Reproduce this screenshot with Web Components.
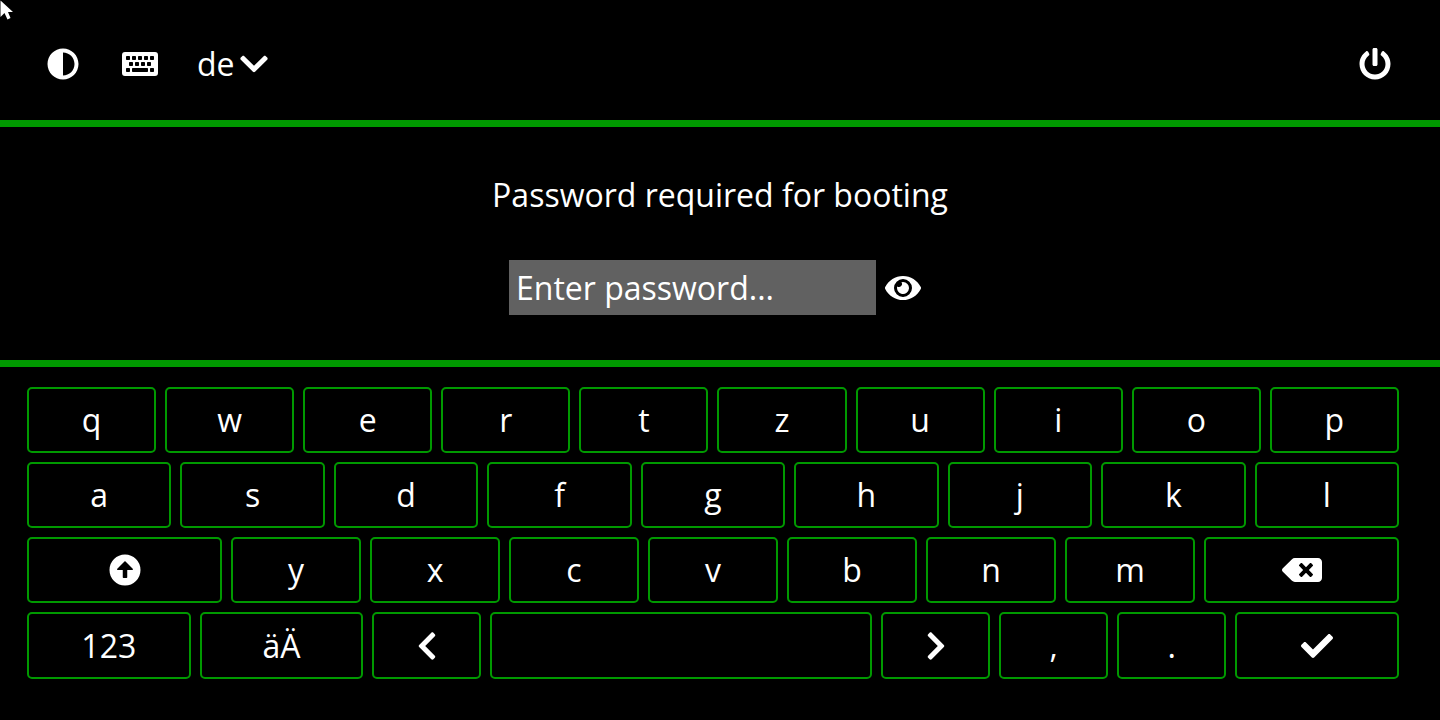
<!DOCTYPE html>
<html lang="en">
<head>
<meta charset="utf-8">
<title>Unlock</title>
<style>
html, body { height: 100%; }
body { margin: 0; background: #000; color: #fff; font: 32px/44px "Open Sans", "Noto Sans", sans-serif; }
</style>
</head>
<body>
<unlock-screen></unlock-screen>
<script>
const ICONS = {
  contrast: [512, 512, 'M8 256c0 136.966 111.033 248 248 248s248-111.034 248-248S392.966 8 256 8 8 119.033 8 256zm248 184V72c101.705 0 184 82.311 184 184 0 101.705-82.311 184-184 184z'],
  keyboard: [576, 512, 'M48 64H528a48 48 0 0 1 48 48V400a48 48 0 0 1-48 48H48a48 48 0 0 1-48-48V112a48 48 0 0 1 48-48z' +
    [[64,128],[160,128],[256,128],[352,128],[448,128],[112,224],[208,224],[304,224],[400,224],[64,320],[448,320]].map(([x, y]) => `M${x + 12} ${y}a12 12 0 0 0-12 12v40a12 12 0 0 0 12 12h40a12 12 0 0 0 12-12v-40a12 12 0 0 0-12-12z`).join('') +
    'M172 320a12 12 0 0 0-12 12v40a12 12 0 0 0 12 12h232a12 12 0 0 0 12-12v-40a12 12 0 0 0-12-12z'],
  power: [512, 512, 'M400 54.1c63 45 104 118.6 104 201.9 0 136.8-110.8 247.7-247.5 248C120 504.3 8.2 393 8 256.4 7.9 173.1 48.9 99.3 111.8 54.2c11.7-8.3 28-4.8 35 7.7L162.6 90c5.9 10.5 3.1 23.8-6.6 31-41.5 30.8-68 79.6-68 134.9-.1 92.3 74.5 168.1 168 168.1 91.6 0 168.6-74.2 168-169.1-.3-51.8-24.7-101.8-68.1-134-9.7-7.2-12.4-20.5-6.5-30.9l15.8-28.1c7-12.4 23.2-16.1 34.8-7.8zM296 264V24c0-13.3-10.7-24-24-24h-32c-13.3 0-24 10.7-24 24v240c0 13.3 10.7 24 24 24h32c13.3 0 24-10.7 24-24z'],
  eye: [576, 512, 'M572.52 241.4C518.29 135.59 410.93 64 288 64S57.68 135.64 3.48 241.41a32.35 32.35 0 0 0 0 29.19C57.71 376.41 165.07 448 288 448s230.32-71.64 284.52-177.41a32.35 32.35 0 0 0 0-29.19zM288 400a144 144 0 1 1 144-144 143.93 143.93 0 0 1-144 144zm0-240a95.31 95.31 0 0 0-25.31 3.79 47.85 47.85 0 0 1-66.9 66.9A95.78 95.78 0 1 0 288 160z'],
  down: [448, 512, 'M207.029 381.476L12.686 187.132c-9.373-9.373-9.373-24.569 0-33.941l22.667-22.667c9.357-9.357 24.522-9.375 33.901-.04L224 284.505l154.745-154.021c9.379-9.335 24.544-9.317 33.901.04l22.667 22.667c9.373 9.373 9.373 24.569 0 33.941L240.971 381.476c-9.373 9.372-24.569 9.372-33.942 0z'],
  left: [320, 512, 'M34.52 239.03L228.87 44.69c9.37-9.37 24.57-9.37 33.94 0l22.67 22.67c9.36 9.36 9.37 24.52.04 33.9L131.49 256l154.02 154.75c9.34 9.38 9.32 24.54-.04 33.9l-22.67 22.67c-9.37 9.37-24.57 9.37-33.94 0L34.52 272.97c-9.37-9.37-9.37-24.57 0-33.94z'],
  right: [320, 512, 'M285.476 272.971L91.132 467.314c-9.373 9.373-24.569 9.373-33.941 0l-22.667-22.667c-9.357-9.357-9.375-24.522-.04-33.901L188.505 256 34.484 101.255c-9.335-9.379-9.317-24.544.04-33.901l22.667-22.667c9.373-9.373 24.569-9.373 33.941 0L285.475 239.03c9.373 9.372 9.373 24.568.001 33.941z'],
  check: [512, 512, 'M173.898 439.404l-166.4-166.4c-9.997-9.997-9.997-26.206 0-36.204l36.203-36.204c9.997-9.998 26.207-9.998 36.204 0L192 312.69 432.095 72.596c9.997-9.997 26.207-9.997 36.204 0l36.203 36.204c9.997 9.997 9.997 26.206 0 36.204l-294.4 294.401c-9.998 9.997-26.207 9.997-36.204-.001z'],
  shift: [512, 512, 'M256 8a248 248 0 1 0 0 496a248 248 0 1 0 0-496zM292 256V372a12 12 0 0 1-12 12H232a12 12 0 0 1-12-12V256H140.900c-10.700 0-16.100-12.900-8.500-20.500L247.500 120.500c4.700-4.700 12.300-4.700 17 0L379.600 235.500c7.600 7.600 2.200 20.500-8.500 20.500z'],
  backspace: [640, 512, 'M576 64H205.26A63.97 63.97 0 0 0 160 82.75L9.37 233.37c-12.5 12.5-12.5 32.76 0 45.25L160 429.25c12 12 28.28 18.75 45.25 18.75H576c35.35 0 64-28.65 64-64V128c0-35.35-28.65-64-64-64zm-84.69 254.06c6.25 6.25 6.25 16.38 0 22.63l-22.62 22.62c-6.25 6.25-16.38 6.25-22.63 0L384 301.25l-62.06 62.06c-6.25 6.25-16.38 6.25-22.63 0l-22.62-22.62c-6.25-6.25-6.25-16.38 0-22.63L338.75 256l-62.06-62.06c-6.25-6.25-6.25-16.38 0-22.63l22.62-22.62c6.25-6.25 16.38-6.25 22.63 0L384 210.75l62.06-62.06c6.25-6.25 16.38-6.25 22.63 0l22.62 22.62c6.25 6.25 6.25 16.38 0 22.63L429.25 256l62.06 62.06z']
};

class UiIcon extends HTMLElement {
  constructor() {
    super();
    const [w, h, d] = ICONS[this.getAttribute('name')];
    this.attachShadow({ mode: 'open' }).innerHTML = `
      <style>
        :host { display: block; flex: none; }
        svg { display: block; width: ${w / 16}px; height: ${h / 16}px; fill: currentColor; }
      </style>
      <svg viewBox="0 0 ${w} ${h}" aria-hidden="true"><path fill-rule="evenodd" d="${d}"/></svg>`;
  }
}
customElements.define('ui-icon', UiIcon);

class IconButton extends HTMLElement {
  constructor() {
    super();
    this.attachShadow({ mode: 'open' }).innerHTML = `
      <style>
        :host { display: block; flex: none; }
        button { display: flex; align-items: center; justify-content: center; width: 40px; margin: 0; padding: 0; border: 0; background: none; color: inherit; font: inherit; cursor: pointer; }
      </style>
      <button type="button" aria-label="${this.getAttribute('label')}"><ui-icon name="${this.getAttribute('icon')}"></ui-icon></button>`;
  }
}
customElements.define('icon-button', IconButton);

class LayoutPicker extends HTMLElement {
  constructor() {
    super();
    this.attachShadow({ mode: 'open' }).innerHTML = `
      <style>
        :host { display: block; }
        label { display: grid; align-items: center; justify-items: end; }
        select, ui-icon { grid-area: 1 / 1; }
        select { appearance: none; width: 71px; height: 44px; margin: 0; padding: 0; border: 0; background: none; color: inherit; font: inherit; }
        ui-icon { pointer-events: none; }
      </style>
      <label><select aria-label="Keyboard layout"><option>de</option><option>fr</option><option>us</option></select><ui-icon name="down"></ui-icon></label>`;
  }
}
customElements.define('layout-picker', LayoutPicker);

class TopBar extends HTMLElement {
  constructor() {
    super();
    this.attachShadow({ mode: 'open' }).innerHTML = `
      <style>
        :host { display: flex; align-items: center; justify-content: space-between; box-sizing: border-box; height: 127px; padding: 8px 45px 0 43px; border-bottom: 7px solid #009900; }
        div { display: flex; align-items: center; }
        .tools { gap: 37px; }
      </style>
      <div class="tools"><slot></slot></div>
      <div><slot name="end"></slot></div>`;
  }
}
customElements.define('top-bar', TopBar);

class PasswordPrompt extends HTMLElement {
  constructor() {
    super();
    this.attachShadow({ mode: 'open' }).innerHTML = `
      <style>
        :host { display: flex; flex-direction: column; align-items: center; box-sizing: border-box; height: 240px; padding-top: 46px; border-bottom: 7px solid #009900; }
        label { display: block; }
        .field { display: flex; align-items: center; gap: 7px; margin: 43px 8px 0 0; }
        input { box-sizing: border-box; width: 367px; height: 55px; margin: 0; padding: 0 7px; border: 0; border-radius: 0; outline: 0; background: #616161; color: inherit; font: inherit; }
        input::placeholder { color: #fff; opacity: 1; }
      </style>
      <label for="password"><slot></slot></label>
      <div class="field">
        <input id="password" type="password" placeholder="Enter password...">
        <icon-button icon="eye" label="Show password"></icon-button>
      </div>`;
  }
}
customElements.define('password-prompt', PasswordPrompt);

class KeyCap extends HTMLElement {
  constructor() {
    super();
    const icon = this.getAttribute('icon');
    const label = this.getAttribute('label');
    this.attachShadow({ mode: 'open' }).innerHTML = `
      <style>
        :host { display: flex; flex: ${this.getAttribute('span') || 1} 1 0; min-width: 0; }
        button { display: flex; flex: 1; align-items: center; justify-content: center; box-sizing: border-box; min-width: 0; margin: 0; padding: 0; border: 2px solid #009900; border-radius: 5px; background: #000; color: inherit; font: inherit; }
      </style>
      <button type="button"${label ? ` aria-label="${label}"` : ''}>${icon ? `<ui-icon name="${icon}"></ui-icon>` : '<slot></slot>'}</button>`;
  }
}
customElements.define('key-cap', KeyCap);

class KeyBoard extends HTMLElement {
  constructor() {
    super();
    const letters = s => [...s].map(c => `<key-cap span="2">${c}</key-cap>`).join('');
    this.attachShadow({ mode: 'open' }).innerHTML = `
      <style>
        :host { display: flex; flex-direction: column; gap: 9px; padding: 20px 41px 0 27px; }
        div { display: flex; gap: 9px; height: 66px; }
        .bottom { height: 67px; }
      </style>
      <div>${letters('qwertzuiop')}</div>
      <div>${letters('asdfghjkl')}</div>
      <div><key-cap span="3" icon="shift" label="Shift"></key-cap>${letters('yxcvbnm')}<key-cap span="3" icon="backspace" label="Backspace"></key-cap></div>
      <div class="bottom">
        <key-cap span="3">123</key-cap><key-cap span="3">äÄ</key-cap>
        <key-cap span="2" icon="left" label="Move left"></key-cap>
        <key-cap span="7" label="Space"></key-cap>
        <key-cap span="2" icon="right" label="Move right"></key-cap>
        <key-cap span="2">,</key-cap><key-cap span="2">.</key-cap>
        <key-cap span="3" icon="check" label="Confirm"></key-cap>
      </div>`;
  }
}
customElements.define('key-board', KeyBoard);

class MousePointer extends HTMLElement {
  constructor() {
    super();
    this.attachShadow({ mode: 'open' }).innerHTML = `
      <style>
        :host { position: absolute; top: 0; left: 0; pointer-events: none; }
        svg { display: block; }
      </style>
      <svg width="14" height="20" viewBox="0 0 14 20" aria-hidden="true"><path fill="#fff" d="M0.500 0.500V17L4.500 13L7.500 19.500L10.500 18L8 12H13z"/></svg>`;
  }
}
customElements.define('mouse-pointer', MousePointer);

class UnlockScreen extends HTMLElement {
  constructor() {
    super();
    this.attachShadow({ mode: 'open' }).innerHTML = `
      <style>:host { display: block; }</style>
      <top-bar>
        <icon-button icon="contrast" label="Toggle theme"></icon-button>
        <icon-button icon="keyboard" label="Toggle keyboard"></icon-button>
        <layout-picker></layout-picker>
        <icon-button slot="end" icon="power" label="Power off"></icon-button>
      </top-bar>
      <password-prompt>Password required for booting</password-prompt>
      <key-board></key-board>
      <mouse-pointer></mouse-pointer>`;
  }
}
customElements.define('unlock-screen', UnlockScreen);
</script>
</body>
</html>
